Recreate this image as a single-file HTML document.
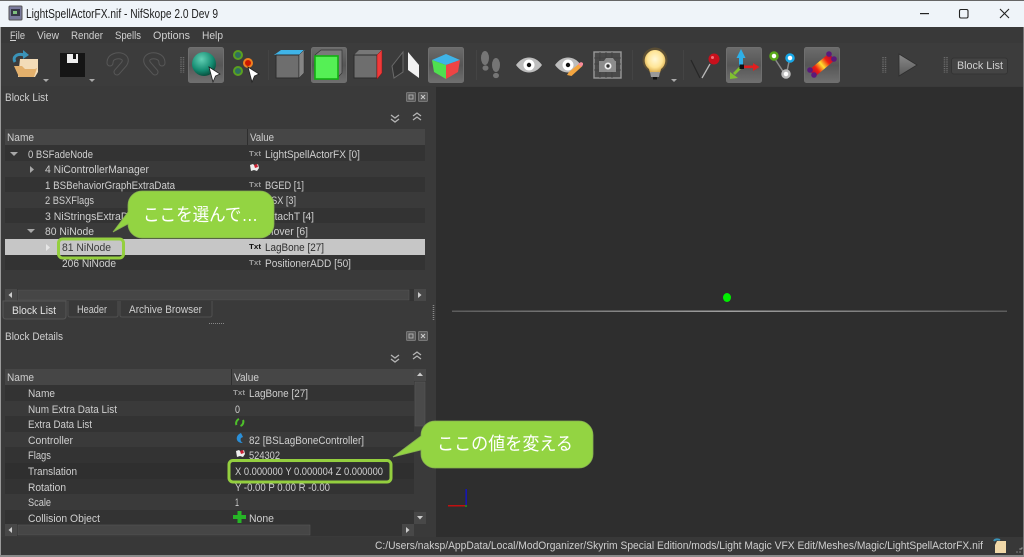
<!DOCTYPE html>
<html><head><meta charset="utf-8"><style>
html,body{margin:0;padding:0;background:#3a3a3a;width:1024px;height:557px;overflow:hidden}
svg{display:block;filter:blur(.3px)}
text{font-family:"Liberation Sans","Noto Sans CJK JP",sans-serif;font-size:11px;fill:#cfcfcf}
</style></head><body>
<svg width="1024" height="557" viewBox="0 0 1024 557" xmlns="http://www.w3.org/2000/svg">
<defs>
<linearGradient id="chk" x1="0" y1="0" x2="0" y2="1"><stop offset="0" stop-color="#6c6c6c"/><stop offset=".5" stop-color="#565656"/><stop offset="1" stop-color="#707070"/></linearGradient>
<radialGradient id="sph" cx=".4" cy=".3" r=".8"><stop offset="0" stop-color="#62d0b4"/><stop offset=".6" stop-color="#138a70"/><stop offset="1" stop-color="#04382a"/></radialGradient>
<radialGradient id="bulb" cx=".5" cy=".4" r=".6"><stop offset="0" stop-color="#fff8d8"/><stop offset=".6" stop-color="#ffe596"/><stop offset="1" stop-color="#d8a848"/></radialGradient>
<linearGradient id="bone" x1="0" y1="0" x2="1" y2="0"><stop offset="0" stop-color="#a80a40"/><stop offset=".25" stop-color="#ee2010"/><stop offset=".5" stop-color="#ffe030"/><stop offset=".75" stop-color="#ee2010"/><stop offset="1" stop-color="#a80a40"/></linearGradient>
<linearGradient id="play" x1="0" y1="0" x2="0" y2="1"><stop offset="0" stop-color="#8a8a8a"/><stop offset="1" stop-color="#5a5a5a"/></linearGradient>
<linearGradient id="ln" x1="0" y1="0" x2="1" y2="0"><stop offset="0" stop-color="#5c5c5c"/><stop offset=".5" stop-color="#a0a0a0"/><stop offset="1" stop-color="#5c5c5c"/></linearGradient>
</defs>

<!-- window -->
<rect width="1024" height="557" fill="#3a3a3a"/>
<rect x="0" y="0" width="1024" height="1" fill="#666"/>
<rect x="0" y="1" width="1024" height="26" fill="#eff4f9"/>
<rect x="0" y="27" width="1024" height="16" fill="#393939"/>
<rect x="0" y="43" width="1024" height="43" fill="#3c3c3c"/>
<rect x="0" y="86" width="1024" height="451" fill="#3a3a3a"/>
<rect x="436" y="87" width="588" height="450" fill="#2e2e2e"/>
<rect x="0" y="537" width="1024" height="18" fill="#383838"/>
<rect x="0" y="555" width="1024" height="2" fill="#8a8a8a"/>
<rect x="0" y="27" width="1" height="528" fill="#9a9a9a"/>
<rect x="1023" y="27" width="1" height="528" fill="#777"/>

<!-- title -->
<rect x="9" y="6" width="13" height="14" rx="1" fill="#7a7a9c" stroke="#555"/>
<rect x="11" y="9" width="9" height="7" fill="#363646"/>
<rect x="13" y="11" width="4" height="3" fill="#7fbf7f"/>
<text x="26" y="18" textLength="192" lengthAdjust="spacingAndGlyphs" style="font-size:13px;fill:#222">LightSpellActorFX.nif - NifSkope 2.0 Dev 9</text>
<rect x="920" y="13" width="9" height="1.2" fill="#222"/>
<rect x="959.5" y="9.5" width="8.5" height="8.5" rx="1.5" fill="none" stroke="#222" stroke-width="1.1"/>
<path d="M1000 9l9 9M1009 9l-9 9" stroke="#222" stroke-width="1.1" fill="none"/>

<!-- menu -->
<text x="10" y="39" textLength="15" lengthAdjust="spacingAndGlyphs">File</text>
<rect x="10" y="40" width="6" height="1" fill="#d2d2d2"/>
<text x="37" y="39" textLength="22" lengthAdjust="spacingAndGlyphs">View</text>
<text x="71" y="39" textLength="32" lengthAdjust="spacingAndGlyphs">Render</text>
<text x="115" y="39" textLength="26" lengthAdjust="spacingAndGlyphs">Spells</text>
<text x="153" y="39" textLength="37" lengthAdjust="spacingAndGlyphs">Options</text>
<text x="202" y="39" textLength="21" lengthAdjust="spacingAndGlyphs">Help</text>

<!-- toolbar: open -->
<path d="M20 59h18v13l-3 5H18z" fill="#f3dcb8"/>
<path d="M14 66h8l3 3h10l2-1-3 9H19z" fill="#e3b06c"/>
<path d="M15 62c-3-5 2-9 9-7" fill="none" stroke="#3a93b8" stroke-width="3"/>
<path d="M23 50l6 5-6 4z" fill="#3a93b8"/>
<path d="M43 79h6l-3 3z" fill="#aaa"/>
<!-- save -->
<rect x="60" y="53" width="25" height="24" fill="#151515"/>
<rect x="67" y="54" width="11" height="9" fill="#eee"/>
<rect x="73" y="54" width="3" height="5" fill="#151515"/>
<path d="M89 79h6l-3 3z" fill="#aaa"/>
<!-- undo / redo -->
<g fill="none" stroke-linecap="round">
<path d="M117 72L124 64C128 58 122 55 116 56C112 57 110 59 110 63" stroke="#575757" stroke-width="7"/>
<path d="M117 72L124 64C128 58 122 55 116 56C112 57 110 59 110 63" stroke="#3c3c3c" stroke-width="5"/>
<path d="M155 72L148 64C144 58 150 55 156 56C160 57 162 59 162 63" stroke="#575757" stroke-width="7"/>
<path d="M155 72L148 64C144 58 150 55 156 56C160 57 162 59 162 63" stroke="#3c3c3c" stroke-width="5"/>
</g>
<!-- grip -->
<path d="M181 57v16M183.5 57v16" stroke="#6c6c6c" stroke-width="1.5" stroke-dasharray="1.2 1"/>
<!-- checked 1 -->
<rect x="188.5" y="47.5" width="35" height="35" rx="2" fill="url(#chk)" stroke="#6f6f6f"/>
<circle cx="204" cy="64" r="12" fill="url(#sph)"/>
<path d="M209 67L220 74L215.500 76L213 82z" fill="#fff" stroke="#222" stroke-width=".8"/>
<!-- select 2 -->
<circle cx="238" cy="55" r="4" fill="#2f6f5f" stroke="#5aa020" stroke-width="2"/>
<circle cx="238" cy="71" r="4" fill="#2f6f5f" stroke="#5aa020" stroke-width="2"/>
<circle cx="248" cy="63" r="4" fill="#cc1800" stroke="#f08020" stroke-width="2"/>
<path d="M248 67L259 74L254.500 76L252 82z" fill="#fff" stroke="#222" stroke-width=".8"/>
<rect x="268" y="50" width="1" height="30" fill="#444"/>
<!-- cube 1 -->
<path d="M274 55l7-5h24l-6 5z" fill="#3fb4e8"/>
<rect x="276" y="55" width="23" height="23" fill="#6e6e6e" stroke="#2c2c2c"/>
<path d="M299 55l5-5v23l-5 5z" fill="#858585" stroke="#2c2c2c" stroke-width=".5"/>
<!-- checked 2 -->
<rect x="311.5" y="47.5" width="35" height="35" rx="2" fill="url(#chk)" stroke="#6f6f6f"/>
<path d="M315 55l6-5h21v23l-5 5z" fill="#7a7a7a" stroke="#333" stroke-width=".7"/>
<rect x="315" y="56" width="23" height="23" fill="#55f055" stroke="#12b012" stroke-width="1.6"/>
<!-- cube 3 -->
<path d="M354 55l5-5h23l-5 5z" fill="#777"/>
<rect x="354" y="55" width="23" height="23" fill="#6e6e6e" stroke="#2c2c2c"/>
<path d="M377 55l5-5v23l-5 6z" fill="#ef3a3a" stroke="#8a1010" stroke-width=".5"/>
<!-- wings -->
<path d="M392 66l11-14v20l-9 6z" fill="#333" stroke="#6a6a6a"/>
<path d="M408 52l11 13v13l-11-8z" fill="#f2f2f2"/>
<!-- checked rgb -->
<rect x="428.5" y="47.5" width="35" height="35" rx="2" fill="url(#chk)" stroke="#6f6f6f"/>
<path d="M432 60l14-6 14 6-14 5z" fill="#3fb4e8"/>
<path d="M432 60l14 5v14l-12-7z" fill="#4fe04f"/>
<path d="M460 60l-14 5v14l12-7z" fill="#ee4444"/>
<rect x="476" y="50" width="1" height="30" fill="#444"/>
<!-- footsteps -->
<g fill="#757575">
<ellipse cx="485" cy="58" rx="4" ry="7"/><ellipse cx="485.500" cy="68" rx="3" ry="2.600"/>
<ellipse cx="496" cy="65" rx="4" ry="7"/><ellipse cx="496" cy="75.500" rx="3" ry="2.600"/>
</g>
<!-- eye -->
<path d="M516 65c7-10 19-10 26 0-7 10-19 10-26 0z" fill="#bdbdbd"/>
<circle cx="529" cy="65" r="5.500" fill="#fff"/><circle cx="529" cy="65" r="2.200" fill="#111"/>
<!-- eye + pencil -->
<path d="M555 65c7-10 19-10 26 0-7 10-19 10-26 0z" fill="#bdbdbd"/>
<circle cx="568" cy="65" r="5.500" fill="#fff"/><circle cx="568" cy="65" r="2.200" fill="#111"/>
<path d="M567 75l2-3 11-9 2.500 3-11 10z" fill="#f4a640"/>
<path d="M578 64l3-2 2 1 0 2-2 2z" fill="#f78a9a"/>
<!-- camera -->
<rect x="594" y="52" width="27" height="26" fill="#4a4a4a" stroke="#999" stroke-width="1.4"/>
<path d="M594 58h27M594 64h27M594 70h27M600 52v26M606 52v26M612 52v26" stroke="#3f3f3f" stroke-width=".8"/>
<path d="M599 61h5l2-3h7l2 3h1v11h-17z" fill="#8c8c8c"/>
<circle cx="608" cy="66" r="3.500" fill="#eee"/><circle cx="608" cy="66" r="1.700" fill="#333"/>
<rect x="632" y="50" width="1" height="30" fill="#444"/>
<!-- bulb -->
<circle cx="655" cy="60" r="12.500" fill="#8a6a28" opacity=".4"/>
<path d="M655 50a10.500 10.500 0 0 1 6 19l-1 4h-10l-1-4a10.500 10.500 0 0 1 6-19z" fill="url(#bulb)"/>
<path d="M650 72h10l-1 5h-8z" fill="#999"/><rect x="653" y="77" width="4" height="2.500" fill="#111"/>
<path d="M671 79h6l-3 3z" fill="#aaa"/>
<rect x="683" y="50" width="1" height="30" fill="#444"/>
<!-- pin -->
<path d="M691 60l9 18" fill="none" stroke="#262626" stroke-width="1.200"/>
<path d="M702 78l8-14" stroke="#b9b9b9" stroke-width="1.300"/>
<circle cx="714" cy="59" r="5.500" fill="#c8101c"/>
<circle cx="712.500" cy="57.500" r="1.500" fill="#f07078"/>
<!-- checked axis -->
<rect x="726.5" y="47.5" width="35" height="35" rx="2" fill="url(#chk)" stroke="#6f6f6f"/>
<rect x="739" y="57" width="4" height="9" fill="#2eb0e8"/><path d="M736.500 58L741 49L745.500 58z" fill="#2eb0e8"/>
<rect x="744" y="65.500" width="10" height="2.600" fill="#e02020"/><path d="M753 63l6.500 4-6.500 4z" fill="#e02020"/>
<path d="M740 68l-6 6" stroke="#80c030" stroke-width="2.800"/><path d="M730 72l0 7 8-1z" fill="#80c030"/>
<rect x="739.500" y="64.500" width="4.500" height="4.500" fill="#111"/>
<!-- nodes -->
<path d="M773 56l13 20M790 57l-4 19" stroke="#8a8a8a" stroke-width="1.500"/>
<circle cx="774" cy="56" r="3.500" fill="#fff" stroke="#58a818" stroke-width="2.500"/>
<circle cx="790" cy="58" r="3.500" fill="#fff" stroke="#18a8e8" stroke-width="2.500"/>
<circle cx="786" cy="74" r="3.500" fill="#fff" stroke="#bbb" stroke-width="2.500"/>
<!-- checked bone -->
<rect x="804.5" y="47.500" width="35" height="35" rx="2" fill="url(#chk)" stroke="#6f6f6f"/>
<g transform="rotate(-40 822 65)"><rect x="809" y="60.500" width="26" height="9" fill="url(#bone)"/></g>
<circle cx="810" cy="70" r="2.800" fill="#5a1a7a"/><circle cx="814" cy="75" r="2.800" fill="#5a1a7a"/>
<circle cx="829" cy="54" r="2.800" fill="#5a1a7a"/><circle cx="834" cy="59" r="2.800" fill="#5a1a7a"/>
<!-- grips, play -->
<path d="M883 57v16M885.500 57v16" stroke="#6c6c6c" stroke-width="1.500" stroke-dasharray="1.200 1"/>
<path d="M899 54l18 11-18 11z" fill="url(#play)" stroke="#2e2e2e" stroke-width=".8"/>
<path d="M944.500 57v16M947 57v16" stroke="#6c6c6c" stroke-width="1.500" stroke-dasharray="1.200 1"/>
<rect x="951.500" y="58" width="56" height="16" rx="2.500" fill="#444" stroke="#333"/>
<text x="957" y="69" textLength="46" lengthAdjust="spacingAndGlyphs">Block List</text>

<!-- Block list dock -->
<text x="5" y="101" textLength="43" lengthAdjust="spacingAndGlyphs">Block List</text>
<rect x="406.500" y="92.500" width="9" height="9" rx="1" fill="#5a5a5a" stroke="#777"/><rect x="409" y="95" width="4" height="4" fill="none" stroke="#bbb" stroke-width=".8"/>
<rect x="418.500" y="92.500" width="9" height="9" rx="1" fill="#5a5a5a" stroke="#777"/><path d="M421 95l4 4m0-4l-4 4" stroke="#ccc"/>
<path d="M391 115l4 3 4-3M391 119l4 3 4-3" fill="none" stroke="#b5b5b5" stroke-width="1.300"/>
<path d="M413 116l4-3 4 3M413 120l4-3 4 3" fill="none" stroke="#b5b5b5" stroke-width="1.300"/>

<!-- tree -->
<rect x="5" y="129" width="420" height="16" fill="#464646"/>
<rect x="247" y="129" width="1" height="16" fill="#2e2e2e"/>
<text x="7" y="141" textLength="27" lengthAdjust="spacingAndGlyphs">Name</text>
<text x="250" y="141" textLength="24" lengthAdjust="spacingAndGlyphs">Value</text>
<rect x="5" y="145" width="420" height="16" fill="#333"/>
<rect x="5" y="161" width="420" height="16" fill="#3a3a3a"/>
<rect x="5" y="177" width="420" height="15" fill="#333"/>
<rect x="5" y="192" width="420" height="16" fill="#3a3a3a"/>
<rect x="5" y="208" width="420" height="15" fill="#333"/>
<rect x="5" y="223" width="420" height="16" fill="#3a3a3a"/>
<rect x="5" y="239" width="420" height="16" fill="#c6c6c6"/>
<rect x="5" y="255" width="420" height="15" fill="#333"/>
<path d="M10 152h8l-4 4z" fill="#a8a8a8"/>
<path d="M30 166v7l4-3.500z" fill="#a8a8a8"/>
<path d="M27 229h8l-4 4z" fill="#a8a8a8"/>
<path d="M46 244v7l4-3.500z" fill="#e6e6e6"/>
<text x="28" y="158" textLength="65" lengthAdjust="spacingAndGlyphs">0 BSFadeNode</text>
<text x="45" y="173" textLength="104" lengthAdjust="spacingAndGlyphs">4 NiControllerManager</text>
<text x="45" y="189" textLength="130" lengthAdjust="spacingAndGlyphs">1 BSBehaviorGraphExtraData</text>
<text x="45" y="204" textLength="49" lengthAdjust="spacingAndGlyphs">2 BSXFlags</text>
<text x="45" y="220" textLength="98" lengthAdjust="spacingAndGlyphs">3 NiStringsExtraData</text>
<text x="45" y="235" textLength="49" lengthAdjust="spacingAndGlyphs">80 NiNode</text>
<text x="62" y="251" textLength="49" lengthAdjust="spacingAndGlyphs" style="fill:#3a3a3a">81 NiNode</text>
<text x="62" y="267" textLength="54" lengthAdjust="spacingAndGlyphs">206 NiNode</text>
<g style="font-weight:bold">
<text x="249" y="156" textLength="12" lengthAdjust="spacingAndGlyphs" style="font-size:7px;fill:#9a9a9a">Txt</text>
<text x="249" y="187" textLength="12" lengthAdjust="spacingAndGlyphs" style="font-size:7px;fill:#9a9a9a">Txt</text>
<text x="249" y="249" textLength="12" lengthAdjust="spacingAndGlyphs" style="font-size:7px;fill:#111">Txt</text>
<text x="249" y="265" textLength="12" lengthAdjust="spacingAndGlyphs" style="font-size:7px;fill:#9a9a9a">Txt</text>
</g>
<path d="M250 165l3-1 2 2 3-2 1 4-2 3-3-1-3 1z" fill="#eee"/><path d="M254 165l3-1 1 3-3 1z" fill="#c23"/>
<text x="265" y="158" textLength="95" lengthAdjust="spacingAndGlyphs">LightSpellActorFX [0]</text>
<text x="265" y="189" textLength="39" lengthAdjust="spacingAndGlyphs">BGED [1]</text>
<text x="265" y="204" textLength="31" lengthAdjust="spacingAndGlyphs">BSX [3]</text>
<text x="265" y="220" textLength="49" lengthAdjust="spacingAndGlyphs">AttachT [4]</text>
<text x="265" y="235" textLength="43" lengthAdjust="spacingAndGlyphs">Mover [6]</text>
<text x="265" y="251" textLength="59" lengthAdjust="spacingAndGlyphs" style="fill:#2e2e2e">LagBone [27]</text>
<text x="265" y="267" textLength="86" lengthAdjust="spacingAndGlyphs">PositionerADD [50]</text>

<!-- h scrollbar 1 -->
<rect x="5" y="289" width="421" height="12" fill="#333"/>
<rect x="18" y="290" width="391" height="10" fill="#464646" stroke="#565656" stroke-width=".6"/>
<rect x="5" y="289" width="12" height="12" fill="#484848"/><path d="M12 292v6l-3.500-3z" fill="#ccc"/>
<rect x="414" y="289" width="12" height="12" fill="#484848"/><path d="M418 292v6l3.500-3z" fill="#ccc"/>

<!-- tabs -->
<path d="M3 301v15q0 3 3 3h57q3 0 3-3v-15z" fill="#404040" stroke="#565656"/>
<path d="M68 301v14q0 2 2 2h46q2 0 2-2v-14" fill="#393939" stroke="#505050"/>
<path d="M120 301v14q0 2 2 2h88q2 0 2-2v-14" fill="#393939" stroke="#505050"/>
<text x="12" y="314" textLength="44" lengthAdjust="spacingAndGlyphs" style="fill:#e2e2e2">Block List</text>
<text x="77" y="313" textLength="30" lengthAdjust="spacingAndGlyphs">Header</text>
<text x="129" y="313" textLength="73" lengthAdjust="spacingAndGlyphs">Archive Browser</text>
<path d="M209 323.500h15" stroke="#888" stroke-width="1" stroke-dasharray="1 1"/>
<path d="M433.500 305v16" stroke="#888" stroke-width="1.500" stroke-dasharray="1 1"/>

<!-- details dock -->
<text x="5" y="340" textLength="58" lengthAdjust="spacingAndGlyphs">Block Details</text>
<rect x="406.500" y="331.500" width="9" height="9" rx="1" fill="#5a5a5a" stroke="#777"/><rect x="409" y="334" width="4" height="4" fill="none" stroke="#bbb" stroke-width=".8"/>
<rect x="418.500" y="331.500" width="9" height="9" rx="1" fill="#5a5a5a" stroke="#777"/><path d="M421 334l4 4m0-4l-4 4" stroke="#ccc"/>
<path d="M391 355l4 3 4-3M391 359l4 3 4-3" fill="none" stroke="#b5b5b5" stroke-width="1.300"/>
<path d="M413 355l4-3 4 3M413 359l4-3 4 3" fill="none" stroke="#b5b5b5" stroke-width="1.300"/>

<rect x="5" y="369" width="409" height="16" fill="#464646"/>
<rect x="231" y="369" width="1" height="16" fill="#2e2e2e"/>
<text x="7" y="381" textLength="27" lengthAdjust="spacingAndGlyphs">Name</text>
<text x="234" y="381" textLength="25" lengthAdjust="spacingAndGlyphs">Value</text>
<rect x="5" y="385" width="409" height="16" fill="#333"/>
<rect x="5" y="401" width="409" height="15" fill="#3a3a3a"/>
<rect x="5" y="416" width="409" height="16" fill="#333"/>
<rect x="5" y="432" width="409" height="15" fill="#3a3a3a"/>
<rect x="5" y="447" width="409" height="16" fill="#333"/>
<rect x="5" y="463" width="409" height="16" fill="#2f2f2f"/>
<rect x="5" y="479" width="409" height="15" fill="#333"/>
<rect x="5" y="494" width="409" height="16" fill="#3a3a3a"/>
<rect x="5" y="510" width="409" height="14" fill="#333"/>

<text x="28" y="397" textLength="27" lengthAdjust="spacingAndGlyphs">Name</text>
<text x="28" y="413" textLength="89" lengthAdjust="spacingAndGlyphs">Num Extra Data List</text>
<text x="28" y="428" textLength="64" lengthAdjust="spacingAndGlyphs">Extra Data List</text>
<text x="28" y="444" textLength="45" lengthAdjust="spacingAndGlyphs">Controller</text>
<text x="28" y="459" textLength="23" lengthAdjust="spacingAndGlyphs">Flags</text>
<text x="28" y="475" textLength="49" lengthAdjust="spacingAndGlyphs">Translation</text>
<text x="28" y="491" textLength="38" lengthAdjust="spacingAndGlyphs">Rotation</text>
<text x="28" y="506" textLength="23" lengthAdjust="spacingAndGlyphs">Scale</text>
<text x="28" y="522" textLength="72" lengthAdjust="spacingAndGlyphs">Collision Object</text>

<text x="233" y="395" textLength="12" lengthAdjust="spacingAndGlyphs" style="font-size:7px;font-weight:bold;fill:#9a9a9a">Txt</text>
<text x="249" y="397" textLength="59" lengthAdjust="spacingAndGlyphs">LagBone [27]</text>
<text x="235" y="413" textLength="5" lengthAdjust="spacingAndGlyphs">0</text>
<path d="M236.500 425c-1-2 0-5 2.500-6M243 420c1 2 0 5-2.500 6" fill="none" stroke="#4ec02a" stroke-width="2"/>
<path d="M241 433c-3 1-5 4-4 7 1 2 3 3 6 3-2-1-3-3-2-5l2-1z" fill="#2a8fd8"/>
<path d="M236 451l3-1 2 2 3-2 1 4-2 3-3-1-3 1z" fill="#eee"/><path d="M240 451l3-1 1 3-3 1z" fill="#c23"/>
<text x="249" y="444" textLength="115" lengthAdjust="spacingAndGlyphs">82 [BSLagBoneController]</text>
<text x="249" y="459" textLength="31" lengthAdjust="spacingAndGlyphs">524302</text>
<text x="235" y="475" textLength="148" lengthAdjust="spacingAndGlyphs">X 0.000000 Y 0.000004 Z 0.000000</text>
<text x="235" y="491" textLength="95" lengthAdjust="spacingAndGlyphs">Y -0.00 P 0.00 R -0.00</text>
<text x="235" y="506" textLength="4" lengthAdjust="spacingAndGlyphs">1</text>
<path d="M237.500 511h4v4h4.500v4h-4.500v4h-4v-4h-4.500v-4h4.500z" fill="#26b526"/>
<text x="249" y="522" textLength="25" lengthAdjust="spacingAndGlyphs">None</text>

<!-- v scrollbar -->
<rect x="414" y="369" width="12" height="155" fill="#3a3a3a"/>
<rect x="414" y="369" width="12" height="12" fill="#484848"/><path d="M417 376h6l-3-3.500z" fill="#ccc"/>
<rect x="415" y="382" width="10" height="44" fill="#4a4a4a" stroke="#565656" stroke-width=".6"/>
<rect x="414" y="512" width="12" height="12" fill="#484848"/><path d="M417 516h6l-3 3.500z" fill="#ccc"/>
<!-- h scrollbar 2 -->
<rect x="5" y="524" width="409" height="12" fill="#333"/>
<rect x="18" y="525" width="292" height="10" fill="#464646" stroke="#565656" stroke-width=".6"/>
<rect x="5" y="524" width="12" height="12" fill="#484848"/><path d="M12 527v6l-3.500-3z" fill="#ccc"/>
<rect x="402" y="524" width="12" height="12" fill="#484848"/><path d="M406 527v6l3.500-3z" fill="#ccc"/>

<!-- viewport -->
<rect x="452" y="310.500" width="555" height="1.500" fill="url(#ln)"/>
<ellipse cx="727" cy="297.500" rx="4" ry="4.500" fill="#00ee00"/>
<rect x="465.500" y="489" width="1.300" height="17" fill="#1010d0"/>
<rect x="448" y="505" width="17" height="1.500" fill="#c01010"/>
<rect x="465" y="505" width="2" height="2" fill="#208020"/>

<!-- status -->
<text x="375" y="549" textLength="608" lengthAdjust="spacingAndGlyphs" style="fill:#cfcfcf">C:/Users/naksp/AppData/Local/ModOrganizer/Skyrim Special Edition/mods/Light Magic VFX Edit/Meshes/Magic/LightSpellActorFX.nif</text>
<path d="M997 541h9v12h-11v-8z" fill="#f0d8a8"/><path d="M994 541c1-2 4-2 6-1" fill="none" stroke="#3a93b8" stroke-width="2"/>
<path d="M1022 548l-1 1M1020 552h.01M1017 552h.01M1020 549h.01" stroke="#888" stroke-width="1.500" stroke-linecap="round"/>

<!-- callouts -->
<path d="M142 191h118a14 14 0 0 1 14 14v19a14 14 0 0 1-14 14H142a14 14 0 0 1-14-14L113 232L128 212V205a14 14 0 0 1 14-14z" fill="#93d442" stroke="#86b050" stroke-width=".8"/>
<text x="143" y="221" textLength="115" lengthAdjust="spacingAndGlyphs" style="font-size:18px;fill:#fff">ここを選んで…</text>
<rect x="58.500" y="239" width="65" height="19" rx="4" fill="none" stroke="#94cf3f" stroke-width="3"/>

<path d="M435 421h144a14 14 0 0 1 14 14v19a14 14 0 0 1-14 14H435a14 14 0 0 1-14-14V450L393 457L421 436V435a14 14 0 0 1 14-14z" fill="#93d442" stroke="#86b050" stroke-width=".8"/>
<text x="437" y="450" textLength="136" lengthAdjust="spacingAndGlyphs" style="font-size:18px;fill:#fff">ここの値を変える</text>
<rect x="229" y="460.500" width="162" height="21.500" rx="4" fill="none" stroke="#94cf3f" stroke-width="3"/>
</svg>
</body></html>
